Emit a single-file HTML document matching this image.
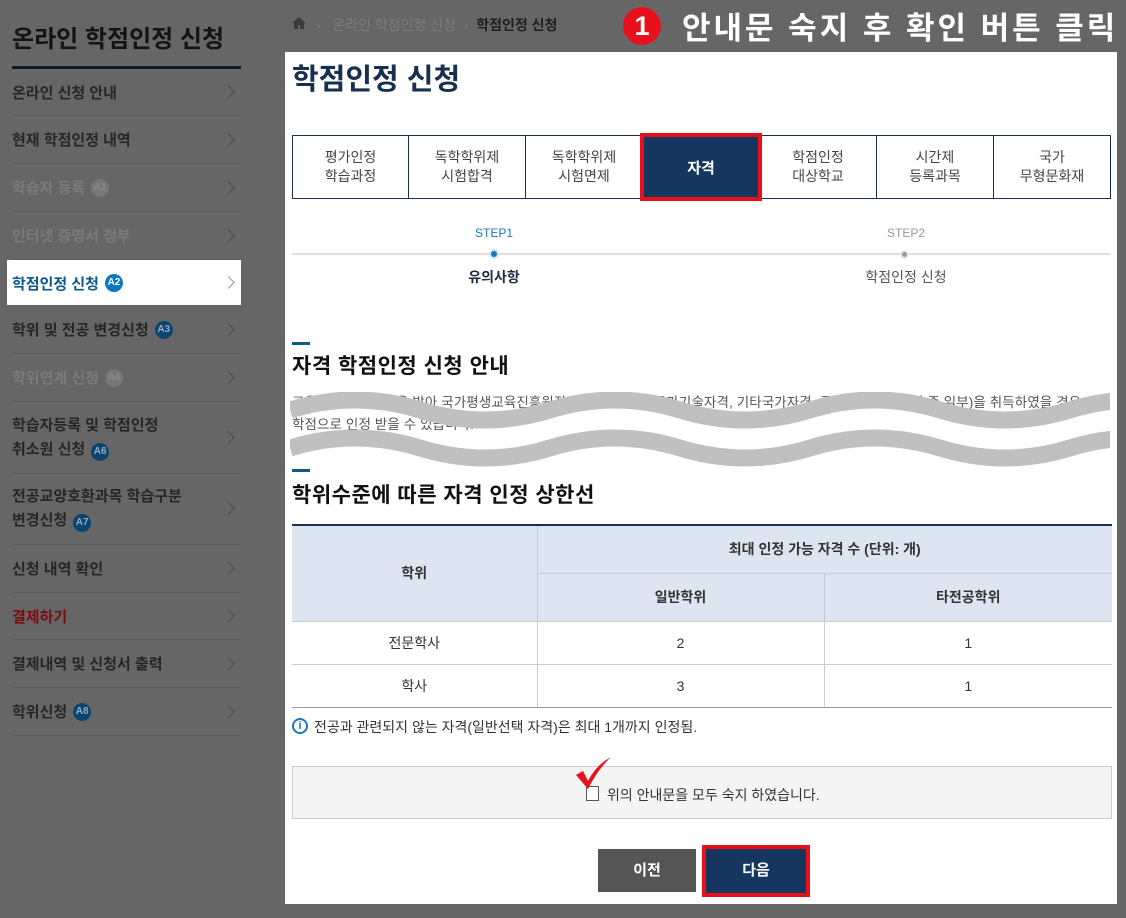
<!DOCTYPE html>
<html><head><meta charset="utf-8"><style>
*{margin:0;padding:0;box-sizing:border-box}
body{width:1126px;height:918px;background:#666;font-family:"Liberation Sans","Noto Sans CJK KR",sans-serif;position:relative;overflow:hidden}
.a{position:absolute}
.it{position:absolute;left:12px;width:229px;border-bottom:1px solid #5a5a5a;font-size:15px;font-weight:bold;color:#262626;display:flex;align-items:center}
.it .ar{position:absolute;right:8px;top:50%;margin-top:-5px;width:9px;height:9px;border-right:1.5px solid #4a4a4a;border-top:1.5px solid #4a4a4a;transform:rotate(45deg)}
.bd{display:inline-block;width:18px;height:18px;border-radius:50%;background:#0c4470;color:#9ab;font-size:10px;line-height:18px;text-align:center;margin-left:6px;font-weight:bold}
.dim{color:#7a7a7a}.dim .bd{background:#777;color:#888}
.panel{left:285px;top:52px;width:832px;height:852px;background:#fff}
.tab{position:absolute;top:135px;height:64px;border:1px solid #1b3050;color:#444;font-size:14px;text-align:center;display:flex;align-items:center;justify-content:center;line-height:19px;background:#fff}
table{border-collapse:collapse;font-size:14px;color:#333}
td{border:1px solid #c8ccd2;text-align:center}
</style></head><body>
<div class="a" style="left:12px;top:19px;font-size:24px;font-weight:bold;color:#141414">온라인 학점인정 신청</div>
<div class="a" style="left:12px;top:66px;width:229px;height:3px;background:#0d1a28"></div>
<div class="it" style="top:69px;height:47px">온라인 신청 안내<i class="ar"></i></div>
<div class="it" style="top:116px;height:48px">현재 학점인정 내역<i class="ar"></i></div>
<div class="it dim" style="top:164px;height:48px">학습자 등록<span class="bd">A1</span><i class="ar"></i></div>
<div class="it dim" style="top:212px;height:48px">인터넷 증명서 첨부<i class="ar"></i></div>
<div class="a" style="left:7px;top:260px;width:234px;height:45px;background:#fff"></div>
<div class="it" style="top:260px;height:46px;color:#0b5a8a;border:none">학점인정 신청<span class="bd" style="background:#0b78c3;color:#fff">A2</span><i class="ar" style="border-color:#999"></i></div>
<div class="it" style="top:306px;height:48px">학위 및 전공 변경신청<span class="bd">A3</span><i class="ar"></i></div>
<div class="it dim" style="top:354px;height:48px">학위연계 신청<span class="bd">A4</span><i class="ar"></i></div>
<div class="it" style="top:402px;height:72px;line-height:24px"><div>학습자등록 및 학점인정<br>취소원 신청<span class="bd">A6</span></div><i class="ar"></i></div>
<div class="it" style="top:474px;height:71px;line-height:24px"><div>전공교양호환과목 학습구분<br>변경신청<span class="bd">A7</span></div><i class="ar"></i></div>
<div class="it" style="top:545px;height:48px">신청 내역 확인<i class="ar"></i></div>
<div class="it" style="top:593px;height:47px;color:#7a0c10">결제하기<i class="ar"></i></div>
<div class="it" style="top:640px;height:48px">결제내역 및 신청서 출력<i class="ar"></i></div>
<div class="it" style="top:688px;height:48px">학위신청<span class="bd">A8</span><i class="ar"></i></div>

<svg class="a" style="left:291px;top:16px" width="16" height="14"><path d="M8 1L1 7h2v6h4V9h2v4h4V7h2z" fill="#3a3a3a"/></svg>
<div class="a" style="left:316px;top:15px;font-size:14px;color:#7c7c7c">›&nbsp;&nbsp; 온라인 학점인정 신청 &nbsp;›&nbsp; <b style="color:#1e1e1e">학점인정 신청</b></div>
<div class="a" style="left:623px;top:7px;width:38px;height:38px;border-radius:50%;background:#e8111b;color:#fff;font-weight:bold;font-size:27px;text-align:center;line-height:38px">1</div>
<div class="a" style="left:682px;top:3px;font-size:31px;font-weight:bold;color:#fff;letter-spacing:3px;white-space:nowrap">안내문 숙지 후 확인 버튼 클릭</div>

<div class="a panel"></div>
<div class="a" style="left:292px;top:56px;font-size:29px;font-weight:bold;color:#17304f">학점인정 신청</div>
<div class="tab" style="left:292px;width:117px">평가인정<br>학습과정</div>
<div class="tab" style="left:408px;width:118px">독학학위제<br>시험합격</div>
<div class="tab" style="left:525px;width:118px">독학학위제<br>시험면제</div>
<div class="tab" style="left:759px;width:118px">학점인정<br>대상학교</div>
<div class="tab" style="left:876px;width:118px">시간제<br>등록과목</div>
<div class="tab" style="left:993px;width:118px">국가<br>무형문화재</div>
<div class="a" style="left:640px;top:133px;width:122px;height:68px;border:4px solid #e8111b;background:#14365f;color:#fff;font-size:15px;font-weight:bold;display:flex;align-items:center;justify-content:center">자격</div>

<div class="a" style="left:292px;top:253px;width:819px;height:2px;background:#dedede"></div>
<div class="a" style="left:474px;top:226px;width:40px;text-align:center;font-size:12px;color:#1a78bd">STEP1</div>
<div class="a" style="left:489px;top:249px;width:10px;height:10px;border-radius:50%;background:#1a78bd;border:2px solid #cfe3f2"></div>
<div class="a" style="left:454px;top:267px;width:80px;text-align:center;font-size:14px;font-weight:bold;color:#1d2d44">유의사항</div>
<div class="a" style="left:886px;top:226px;width:40px;text-align:center;font-size:12px;color:#999">STEP2</div>
<div class="a" style="left:900px;top:250px;width:9px;height:9px;border-radius:50%;background:#999;border:2px solid #e8e8e8"></div>
<div class="a" style="left:846px;top:267px;width:120px;text-align:center;font-size:14px;color:#555">학점인정 신청</div>

<div class="a" style="left:292px;top:342px;width:18px;height:3px;background:#0b5a8a"></div>
<div class="a" style="left:292px;top:350px;font-size:21px;font-weight:bold;color:#111;letter-spacing:0.5px">자격 학점인정 신청 안내</div>
<div class="a" style="left:292px;top:392px;font-size:13.5px;color:#555;line-height:22px;white-space:nowrap;letter-spacing:0.1px">교육부장관의 승인을 받아 국가평생교육진흥원장이 고시한 자격(국가기술자격, 기타국가자격, 국가공인 민간자격 중 일부)을 취득하였을 경우,<br>학점으로 인정 받을 수 있습니다.</div>
<svg class="a" style="left:290px;top:392px" width="820" height="80"><g fill="none" stroke="#c0c0c0" stroke-width="17"><path d="M0 18 Q65 -2 130 18 T260 18 T390 18 T520 18 T650 18 T780 18 T910 18"/><path d="M0 56 Q65 36 130 56 T260 56 T390 56 T520 56 T650 56 T780 56 T910 56"/></g></svg>

<div class="a" style="left:292px;top:469px;width:18px;height:3px;background:#0b5a8a"></div>
<div class="a" style="left:292px;top:479px;font-size:21px;font-weight:bold;color:#111;letter-spacing:0.5px">학위수준에 따른 자격 인정 상한선</div>
<table class="a" style="left:292px;top:524px;width:820px;border-top:2px solid #17304f">
<tr style="height:48px;background:#dde5f0;font-weight:bold;color:#333"><td rowspan="2" style="width:245px;border-left:none">학위</td><td colspan="2" style="border-right:none">최대 인정 가능 자격 수 (단위: 개)</td></tr>
<tr style="height:48px;background:#dde5f0;font-weight:bold;color:#333"><td style="width:287px">일반학위</td><td style="border-right:none">타전공학위</td></tr>
<tr style="height:43px"><td style="border-left:none">전문학사</td><td>2</td><td style="border-right:none">1</td></tr>
<tr style="height:43px"><td style="border-left:none;border-bottom:1px solid #999">학사</td><td style="border-bottom:1px solid #999">3</td><td style="border-right:none;border-bottom:1px solid #999">1</td></tr>
</table>
<div class="a" style="left:292px;top:718px;width:16px;height:16px;border:2px solid #1a78bd;border-radius:50%;color:#1a78bd;font-size:11px;font-weight:bold;text-align:center;line-height:12px">i</div>
<div class="a" style="left:314px;top:717px;font-size:14px;color:#333">전공과 관련되지 않는 자격(일반선택 자격)은 최대 1개까지 인정됨.</div>

<div class="a" style="left:292px;top:766px;width:820px;height:53px;background:#f4f4f4;border:1px solid #ccc"></div>
<div class="a" style="left:586px;top:786px;width:13px;height:15px;border:1px solid #555;background:#fff"></div>
<div class="a" style="left:607px;top:785px;font-size:14px;color:#333">위의 안내문을 모두 숙지 하였습니다.</div>
<svg class="a" style="left:574px;top:755px" width="40" height="36"><path d="M2 20 L9 16 L14 26 Q22 10 37 2 Q24 14 14 34 Z" fill="#e8111b"/></svg>

<div class="a" style="left:598px;top:849px;width:98px;height:43px;background:#555;color:#fff;font-size:15px;font-weight:bold;text-align:center;line-height:43px">이전</div>
<div class="a" style="left:702px;top:845px;width:108px;height:52px;border:4px solid #e8111b;background:#14365f;color:#fff;font-size:15px;font-weight:bold;text-align:center;line-height:44px">다음</div>
</body></html>
